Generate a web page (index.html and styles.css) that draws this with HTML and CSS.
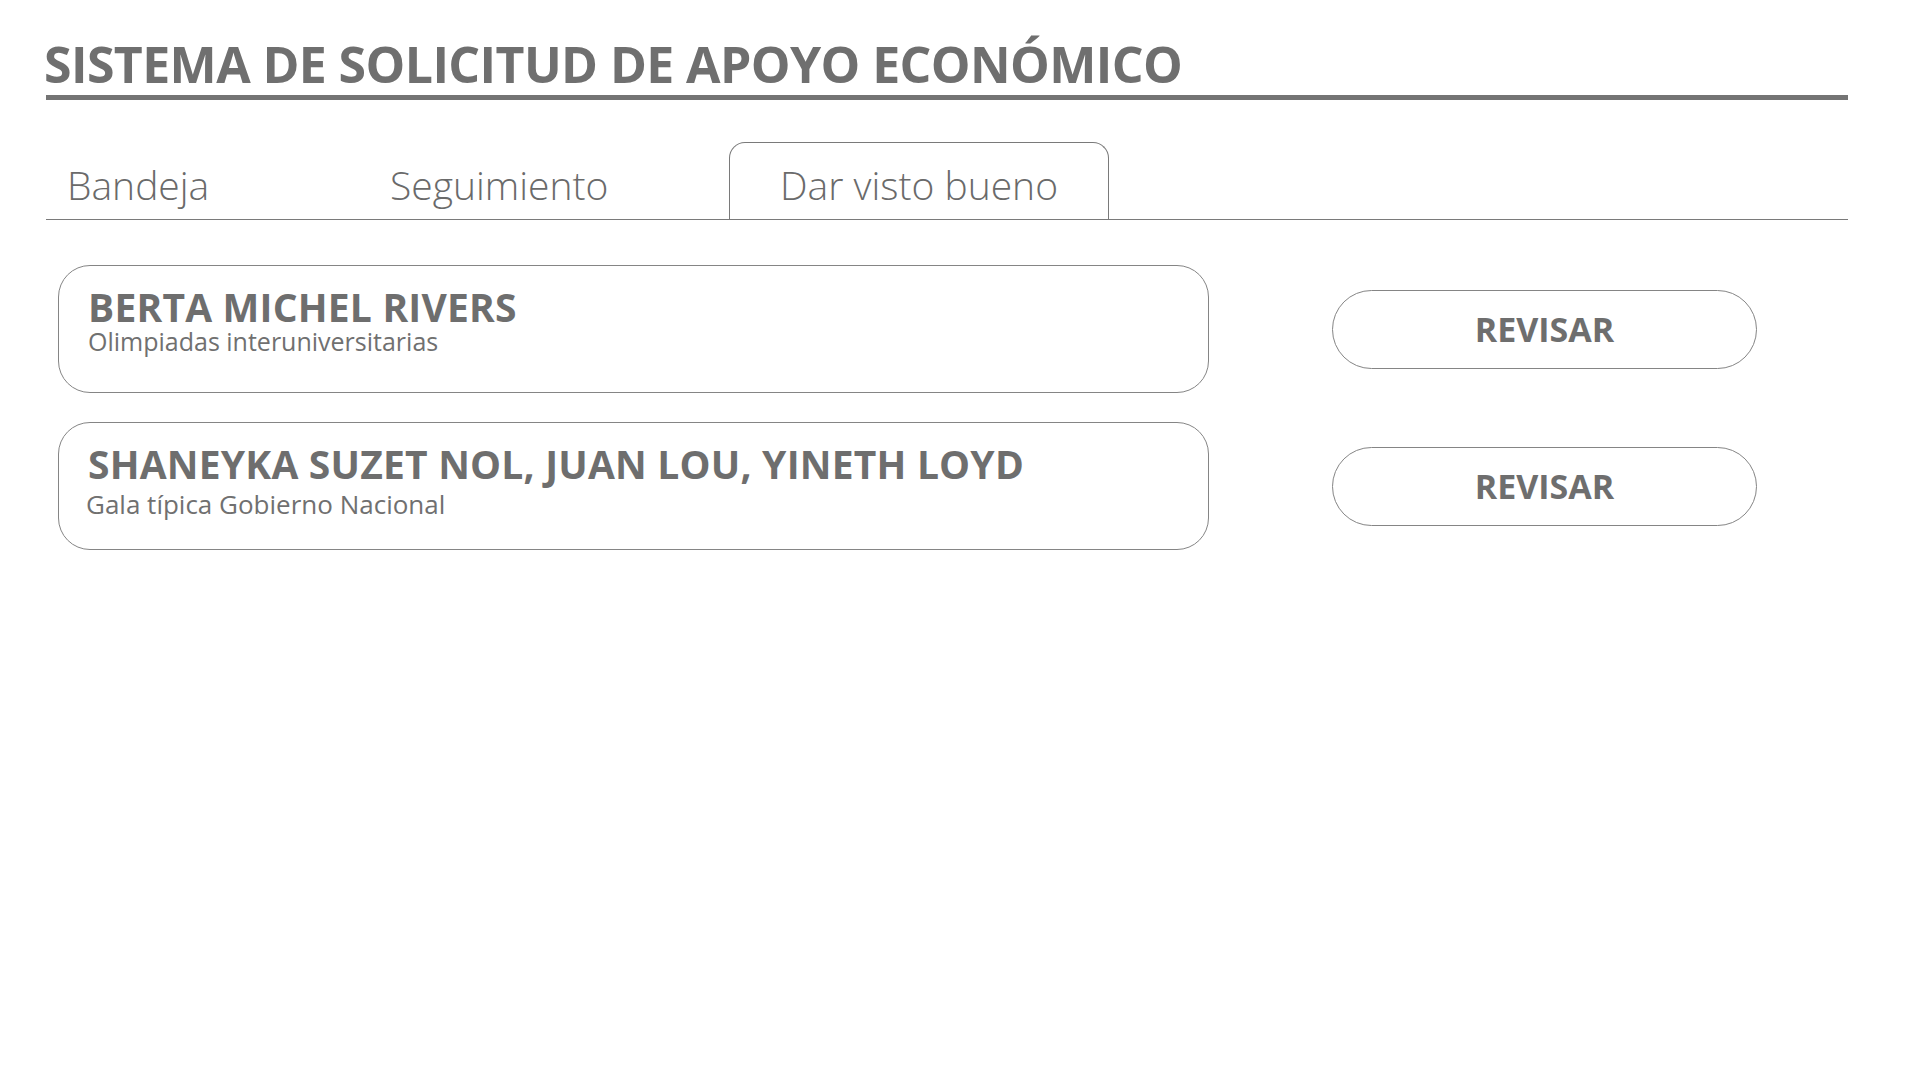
FILE: index.html
```html
<!DOCTYPE html>
<html lang="es">
<head>
<meta charset="utf-8">
<title>Sistema de Solicitud de Apoyo Económico</title>
<link rel="stylesheet" href="styles.css">
</head>
<body>
<div class="page">
  <header class="header">
    <h1 class="title">SISTEMA DE SOLICITUD DE APOYO ECONÓMICO</h1>
  </header>

  <nav class="tabs">
    <div class="tab tab-first">Bandeja</div>
    <div class="tab tab-second">Seguimiento</div>
    <div class="tab tab-active">Dar visto bueno</div>
  </nav>

  <section class="list">
    <div class="row">
      <div class="card">
        <div class="card-name">BERTA MICHEL RIVERS</div>
        <div class="card-sub">Olimpiadas interuniversitarias</div>
      </div>
      <button class="btn">REVISAR</button>
    </div>
    <div class="row">
      <div class="card">
        <div class="card-name">SHANEYKA SUZET NOL, JUAN LOU, YINETH LOYD</div>
        <div class="card-sub card-sub-spaced">Gala típica Gobierno Nacional</div>
      </div>
      <button class="btn">REVISAR</button>
    </div>
  </section>
</div>
</body>
</html>
```
FILE: styles.css
```css
html, body {
  margin: 0;
  padding: 0;
  background: #ffffff;
}

body {
  font-family: "Open Sans", "Noto Sans", "Liberation Sans", sans-serif;
  color: #707070;
}

.page {
  padding: 0 0 0 46px;
  width: 1802px;
}

.header {
  padding-top: 34px;
  padding-bottom: 1px;
  border-bottom: 5px solid #747474;
}

.title {
  margin: 0 0 0 -2px;
  font-size: 50px;
  line-height: 60px;
  font-weight: 700;
  color: #6f6f6f;
  letter-spacing: -0.6px;
}

.tabs {
  margin-top: 42px;
  display: flex;
  align-items: flex-end;
  border-bottom: 1px solid #7a7a7a;
}

.tab {
  box-sizing: border-box;
  height: 77px;
  padding: 17px 0 8px 21px;
  font-size: 39px;
  line-height: 52px;
  font-weight: 300;
  color: #6a6a6a;
}

.tab-first {
  width: 323px;
}

.tab-second {
  width: 360px;
}

.tab-active {
  padding: 16px 50px 8px 50px;
  border: 1px solid #7a7a7a;
  border-bottom: none;
  border-radius: 16px 16px 0 0;
}

.list {
  margin-top: 45px;
  display: flex;
  flex-direction: column;
  gap: 29px;
}

.row {
  display: flex;
  align-items: center;
  gap: 123px;
  padding-left: 12px;
}

.card {
  box-sizing: border-box;
  width: 1151px;
  height: 128px;
  border: 1px solid #858585;
  border-radius: 32px;
  padding: 21px 0 0 29px;
}

.card-name {
  font-size: 39px;
  line-height: 40px;
  font-weight: 700;
  letter-spacing: 0.2px;
  color: #6e6e6e;
}

.card-sub {
  margin-top: 1px;
  font-size: 25px;
  line-height: 26px;
  font-weight: 400;
  color: #707070;
}

.card-sub-spaced {
  margin-top: 7px;
  margin-left: -2px;
  font-size: 26px;
}

.btn {
  box-sizing: border-box;
  width: 425px;
  height: 79px;
  border: 1px solid #858585;
  border-radius: 40px;
  background: #ffffff;
  font-family: "Open Sans", "Noto Sans", "Liberation Sans", sans-serif;
  font-size: 34px;
  font-weight: 700;
  color: #6e6e6e;
  padding: 0;
  cursor: pointer;
}
```
